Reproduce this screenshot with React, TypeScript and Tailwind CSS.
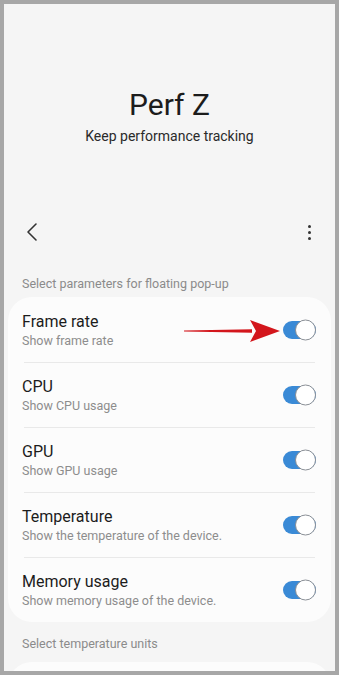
import React from "react";

const rows = [
  { title: "Frame rate", sub: "Show frame rate" },
  { title: "CPU", sub: "Show CPU usage" },
  { title: "GPU", sub: "Show GPU usage" },
  { title: "Temperature", sub: "Show the temperature of the device." },
  { title: "Memory usage", sub: "Show memory usage of the device." },
];

function Toggle() {
  return (
    <div className="relative h-[18px] w-[33px] shrink-0 rounded-full bg-[#3a8ad6]">
      <div className="absolute right-0 top-1/2 h-[21px] w-[21px] -translate-y-1/2 rounded-full border-[1.5px] border-[#8a8f96] bg-white" />
    </div>
  );
}

function Arrow() {
  return (
    <svg
      className="absolute left-[172px] top-[21px]"
      width="100"
      height="24"
      viewBox="0 0 100 24"
    >
      <path d="M4 11.4 L72 10.2 L72 13.8 L4 12.6 Z" fill="#d3161c" />
      <path d="M70 1 L100 12 L70 23 L76 12 Z" fill="#d3161c" />
    </svg>
  );
}

export default function App() {
  return (
    <div
      className="h-[675px] w-[339px] overflow-hidden bg-[#a7a7a7] p-[4px]"
      style={{ fontFamily: "Roboto, 'Noto Sans', sans-serif" }}
    >
      <div className="h-full overflow-hidden bg-[#f5f5f5]">
        <div className="flex flex-col items-center pt-[83px]">
          <h1 className="text-[30px] leading-[36px] text-[#1c1c1c]">Perf Z</h1>
          <p className="mt-[3px] text-[14px] leading-[20px] text-[#2a2a2a]">
            Keep performance tracking
          </p>
        </div>

        <div className="mt-[58px] flex h-[56px] items-center justify-between pl-[20px] pr-[24px]">
          <svg width="16" height="20" viewBox="0 0 16 20">
            <path
              d="M12 2 L4 10 L12 18"
              fill="none"
              stroke="#333"
              strokeWidth="1.6"
              strokeLinecap="round"
              strokeLinejoin="round"
            />
          </svg>
          <div className="flex flex-col items-center gap-[3px]">
            <span className="h-[3px] w-[3px] rounded-full bg-[#333]" />
            <span className="h-[3px] w-[3px] rounded-full bg-[#333]" />
            <span className="h-[3px] w-[3px] rounded-full bg-[#333]" />
          </div>
        </div>

        <p className="mt-[16px] pl-[18px] text-[12.5px] leading-[16px] text-[#8b8b8b]">
          Select parameters for floating pop-up
        </p>

        <div className="mx-[4px] mt-[5px] rounded-[24px] bg-[#fcfcfc] pt-px">
          {rows.map((r, i) => (
            <div key={r.title} className="relative">
              {i > 0 && <div className="mx-[16px] h-px bg-[#e9e9e9]" />}
              <div className="flex h-[64px] items-center justify-between pl-[14px] pr-[15px]">
                <div className="flex flex-col">
                  <span className="text-[16px] leading-[20px] text-[#1c1c1c]">{r.title}</span>
                  <span className="mt-px text-[12.5px] leading-[16px] text-[#8d8d8d]">{r.sub}</span>
                </div>
                <Toggle />
              </div>
              {i === 0 && <Arrow />}
            </div>
          ))}
        </div>

        <p className="mt-[14px] pl-[18px] text-[12.5px] leading-[16px] text-[#8b8b8b]">
          Select temperature units
        </p>
        <div className="mx-[4px] mt-[10px] h-[40px] rounded-t-[24px] bg-[#fcfcfc]" />
      </div>
    </div>
  );
}
